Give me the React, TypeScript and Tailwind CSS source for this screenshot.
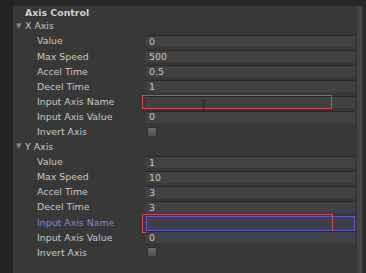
import React from "react";

type Row = { label: string; value?: string; kind?: "field" | "check" | "red" | "redFocus" };

const xRows: Row[] = [
  { label: "Value", value: "0" },
  { label: "Max Speed", value: "500" },
  { label: "Accel Time", value: "0.5" },
  { label: "Decel Time", value: "1" },
  { label: "Input Axis Name", kind: "red" },
  { label: "Input Axis Value", value: "0" },
  { label: "Invert Axis", kind: "check" },
];

const yRows: Row[] = [
  { label: "Value", value: "1" },
  { label: "Max Speed", value: "10" },
  { label: "Accel Time", value: "3" },
  { label: "Decel Time", value: "3" },
  { label: "Input Axis Name", kind: "redFocus" },
  { label: "Input Axis Value", value: "0" },
  { label: "Invert Axis", kind: "check" },
];

function Field({ row }: { row: Row }) {
  if (row.kind === "check") {
    return (
      <div className="ml-[1px] h-[10px] w-[10px] rounded-[2px] bg-gradient-to-b from-[#6b6b6b] to-[#4e4e4e] border border-[#2e2e2e]" />
    );
  }
  if (row.kind === "redFocus") {
    return (
      <div className="relative h-full w-full">
        <div className="absolute left-0 right-[2px] top-[1px] h-[15px] bg-[#3f3f4a] border border-[#5a5ad0]" />
        <div className="absolute left-[-4px] top-[-1px] h-[19px] w-[191px] border-[1.5px] border-[#d24a55]" />
      </div>
    );
  }
  return (
    <div className="relative flex h-[12px] w-full items-center border-t border-[#272727] bg-[#424242] pl-[3px] mr-[2px]">
      <span className="text-[#c9c9c9]">{row.value}</span>
      {row.kind === "red" && (
        <>
          <div className="absolute left-[-4px] top-[-2px] h-[14px] w-[190px] border-[1.5px] border-[#d24a55]" />
          <svg className="absolute left-[54px] top-[3px]" width="7" height="15" viewBox="0 0 7 15">
            <path d="M1 0.5h5M3.5 0.5v14M1 14.5h5" stroke="#2a2a2a" strokeWidth="1.4" fill="none" />
          </svg>
        </>
      )}
    </div>
  );
}

function Rows({ rows }: { rows: Row[] }) {
  return (
    <>
      {rows.map((r, i) => (
        <div key={i} className="flex h-[15.1px] items-center">
          <div
            className={`w-[133px] pl-[24px] shrink-0 ${r.kind === "redFocus" ? "text-[#8185d8]" : "text-[#c9c9c9]"}`}
          >
            {r.label}
          </div>
          <div className="flex flex-1 items-center h-full">
            <Field row={r} />
          </div>
        </div>
      ))}
    </>
  );
}

function Foldout({ title }: { title: string }) {
  return (
    <div className="flex h-[15.1px] items-center text-[#c9c9c9]">
      <span className="w-[12px] pl-[3px] text-[7px] text-[#8a8a8a]">▼</span>
      <span>{title}</span>
    </div>
  );
}

export default function App() {
  return (
    <div
      className="flex h-[273px] w-[366px] overflow-hidden bg-[#383838] text-[9.4px] leading-none"
      style={{ fontFamily: '"DejaVu Sans", Verdana, sans-serif' }}
    >
      <div className="w-[13px] shrink-0 bg-[#232323]" />
      <div className="flex flex-1 flex-col">
        <div className="h-[6px] bg-[#262626]" />
        <div className="flex flex-1">
          <div className="flex flex-1 flex-col">
            <div className="flex h-[12.5px] items-center pl-[12px] font-bold text-[#d0d0d0]">Axis Control</div>
            <Foldout title="X Axis" />
            <Rows rows={xRows} />
            <Foldout title="Y Axis" />
            <Rows rows={yRows} />
          </div>
          <div className="w-[9px] shrink-0 flex">
            <div className="w-[5px] bg-[#454545]" />
            <div className="flex-1 bg-[#2c2c2c]" />
          </div>
        </div>
      </div>
    </div>
  );
}
